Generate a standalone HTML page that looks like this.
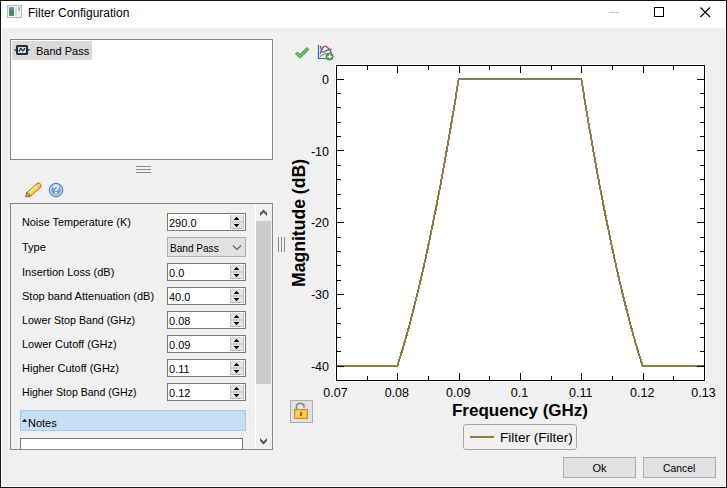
<!DOCTYPE html>
<html><head><meta charset="utf-8">
<style>
*{margin:0;padding:0;box-sizing:border-box}
html,body{width:727px;height:488px;overflow:hidden;background:#f0f0f0}
body{position:relative;font-family:"Liberation Sans",sans-serif;font-size:11px;color:#000}
.a{position:absolute}
.t{position:absolute;white-space:nowrap;line-height:12px;transform-origin:0 0}
#win{left:0;top:0;width:727px;height:488px;border:1px solid #141414;background:#f0f0f0}
#title{left:1px;top:1px;width:725px;height:27px;background:#fff}
#inner{left:1px;top:28px;width:1px;height:458px;background:#fff}
#innerr{left:725px;top:28px;width:1px;height:458px;background:#fff}
#innerb{left:1px;top:486px;width:725px;height:1px;background:#fff}
.lb{border:1px solid #828790;background:#fff}
.spin{width:79px;height:18px;border:1px solid #7a7a7a;background:#fff}
.sbtn{position:absolute;left:63px;width:14px;height:7px;border:1px solid #d4d4d4;background:#e9e9e9}
.combo{width:79px;height:20px;border:1px solid #adadad;background:#e1e1e1}
.btn{border:1px solid #adadad;background:#e1e1e1}
</style></head><body>
<div class="a" id="win"></div>
<div class="a" id="title"></div>
<div class="a" id="inner"></div>
<div class="a" id="innerr"></div>
<div class="a" id="innerb"></div>

<!-- title bar -->
<svg class="a" style="left:0;top:0" width="727" height="30">
  <defs><linearGradient id="ig" x1="0" y1="0" x2="0" y2="1"><stop offset="0" stop-color="#6a9ccc"/><stop offset="0.5" stop-color="#3f8a6a"/><stop offset="1" stop-color="#4aa050"/></linearGradient>
  <linearGradient id="ig2" x1="0" y1="0" x2="0" y2="1"><stop offset="0" stop-color="#88b4d8"/><stop offset="1" stop-color="#a8d098"/></linearGradient></defs>
  <rect x="7.5" y="5.5" width="14" height="12" fill="#f2f2f2" stroke="#b8b8b8"/>
  <rect x="9" y="7" width="5" height="9" fill="url(#ig)"/>
  <rect x="15" y="7" width="2" height="9" fill="#dcdcdc"/>
  <rect x="18" y="7" width="2" height="4" fill="url(#ig2)"/>
  <line x1="609" y1="12.5" x2="619" y2="12.5" stroke="#c4c4c4"/>
  <rect x="654.5" y="7.5" width="9" height="9" fill="none" stroke="#000"/>
  <path d="M700.5 7.5 L710 17 M710 7.5 L700.5 17" stroke="#000" stroke-width="1.1"/>
</svg>
<div class="t" style="left:28px;top:6px;font-size:12px;line-height:14px">Filter Configuration</div>

<!-- list box -->
<div class="a lb" style="left:10px;top:39px;width:263px;height:121px"></div>
<div class="a" style="left:12px;top:41px;width:80px;height:19px;background:#d9d9d9"></div>
<svg class="a" style="left:0;top:0" width="60" height="70">
  <rect x="17" y="46" width="10" height="8" fill="none" stroke="#1b3047" stroke-width="2" rx="0.6"/>
  <path d="M14.5 50 H17 M27 50 H29.5" stroke="#1b3047" stroke-width="1.6"/>
  <path d="M19.2 51.5 Q20.3 46.8 21.8 49.5 Q23.2 52.5 24.8 48" fill="none" stroke="#1b3047" stroke-width="1.3"/>
</svg>
<div class="t" style="left:36px;top:45px;font-size:11px;line-height:12px">Band Pass</div>

<!-- splitter handle horizontal -->
<svg class="a" style="left:130px;top:160px" width="30" height="20">
  <path d="M6 6.5 H21 M6 9.5 H21 M6 12.5 H21" stroke="#868b94"/>
</svg>

<!-- pencil & help -->
<svg class="a" style="left:20px;top:176px" width="50" height="26">
  <path d="M9 18 L18.5 9.8" stroke="#c27a18" stroke-width="6" stroke-linecap="round"/>
  <path d="M9 18 L18.5 9.8" stroke="#f7dc52" stroke-width="4"/>
  <path d="M8.3 16.6 L17.3 8.8" stroke="#fff6b0" stroke-width="1"/>
  <path d="M17.5 10.6 L19 9.2" stroke="#f0c8b0" stroke-width="3.2" stroke-linecap="round"/>
  <path d="M5.5 21 L7 16.5 L10.5 19.5 Z" fill="#e8b070" stroke="#8a5010" stroke-width="0.8" stroke-linejoin="round"/>
  <circle cx="36" cy="14" r="6.8" fill="#75a0d6" stroke="#4f7fc0" stroke-width="1"/>
  <circle cx="36" cy="14" r="5.4" fill="none" stroke="#e4eefa" stroke-width="1"/>
  <path d="M34 12.2 Q34 10 36 10 Q38 10 38 12 Q38 13.3 36 14 V15" fill="none" stroke="#fff" stroke-width="1.6"/>
  <rect x="35.1" y="16" width="1.8" height="1.8" fill="#fff"/>
</svg>

<!-- scroll area -->
<div class="a lb" style="left:10px;top:203px;width:263px;height:247px;background:#f0f0f0;overflow:hidden"></div>
<!-- scrollbar -->
<div class="a" style="left:255px;top:204px;width:1px;height:245px;background:#ffffff"></div>
<div class="a" style="left:256px;top:221px;width:15px;height:163px;background:#cdcdcd"></div>
<svg class="a" style="left:255px;top:204px" width="17" height="245">
  <path d="M5 9 L8.5 5.5 L12 9 V12 L8.5 8.5 L5 12 Z" fill="#555"/>
  <path d="M5 234 L8.5 237.5 L12 234 V237 L8.5 240.5 L5 237 Z" fill="#555"/>
</svg>

<!-- labels -->
<div class="t" style="left:22px;top:216px;transform:scaleX(0.985)">Noise Temperature (K)</div>
<div class="t" style="left:22px;top:241px">Type</div>
<div class="t" style="left:22px;top:266px">Insertion Loss (dB)</div>
<div class="t" style="left:22px;top:290px">Stop band Attenuation (dB)</div>
<div class="t" style="left:22px;top:314px;transform:scaleX(0.969)">Lower Stop Band (GHz)</div>
<div class="t" style="left:22px;top:338px">Lower Cutoff (GHz)</div>
<div class="t" style="left:22px;top:362px">Higher Cutoff (GHz)</div>
<div class="t" style="left:22px;top:386px;transform:scaleX(0.96)">Higher Stop Band (GHz)</div>

<!-- spinboxes -->
<div class="a spin" style="left:167px;top:213px"><div class="t" style="left:1px;top:3px">290.0</div></div>
<div class="a combo" style="left:167px;top:237px"><div class="t" style="left:2px;top:4px;transform:scaleX(0.915)">Band Pass</div></div>
<div class="a spin" style="left:167px;top:263px"><div class="t" style="left:1px;top:3px">0.0</div></div>
<div class="a spin" style="left:167px;top:287px"><div class="t" style="left:1px;top:3px">40.0</div></div>
<div class="a spin" style="left:167px;top:311px"><div class="t" style="left:1px;top:3px">0.08</div></div>
<div class="a spin" style="left:167px;top:335px"><div class="t" style="left:1px;top:3px">0.09</div></div>
<div class="a spin" style="left:167px;top:359px"><div class="t" style="left:1px;top:3px">0.11</div></div>
<div class="a spin" style="left:167px;top:383px"><div class="t" style="left:1px;top:3px">0.12</div></div>
<svg class="a" style="left:0;top:0" width="260" height="410">
<rect x="230" y="215" width="14" height="14" fill="#e6e6e6"/>
<path d="M230.5 215 V228.5 H243.5 V215 M231 222.0 H243" fill="none" stroke="#bcbcbc"/>
<path d="M236.5 216.8 L239.3 220 L233.7 220 Z M233.7 224 L239.3 224 L236.5 227.2 Z" fill="#000"/>
<rect x="230" y="265" width="14" height="14" fill="#e6e6e6"/>
<path d="M230.5 265 V278.5 H243.5 V265 M231 272.0 H243" fill="none" stroke="#bcbcbc"/>
<path d="M236.5 266.8 L239.3 270 L233.7 270 Z M233.7 274 L239.3 274 L236.5 277.2 Z" fill="#000"/>
<rect x="230" y="289" width="14" height="14" fill="#e6e6e6"/>
<path d="M230.5 289 V302.5 H243.5 V289 M231 296.0 H243" fill="none" stroke="#bcbcbc"/>
<path d="M236.5 290.8 L239.3 294 L233.7 294 Z M233.7 298 L239.3 298 L236.5 301.2 Z" fill="#000"/>
<rect x="230" y="313" width="14" height="14" fill="#e6e6e6"/>
<path d="M230.5 313 V326.5 H243.5 V313 M231 320.0 H243" fill="none" stroke="#bcbcbc"/>
<path d="M236.5 314.8 L239.3 318 L233.7 318 Z M233.7 322 L239.3 322 L236.5 325.2 Z" fill="#000"/>
<rect x="230" y="337" width="14" height="14" fill="#e6e6e6"/>
<path d="M230.5 337 V350.5 H243.5 V337 M231 344.0 H243" fill="none" stroke="#bcbcbc"/>
<path d="M236.5 338.8 L239.3 342 L233.7 342 Z M233.7 346 L239.3 346 L236.5 349.2 Z" fill="#000"/>
<rect x="230" y="361" width="14" height="14" fill="#e6e6e6"/>
<path d="M230.5 361 V374.5 H243.5 V361 M231 368.0 H243" fill="none" stroke="#bcbcbc"/>
<path d="M236.5 362.8 L239.3 366 L233.7 366 Z M233.7 370 L239.3 370 L236.5 373.2 Z" fill="#000"/>
<rect x="230" y="385" width="14" height="14" fill="#e6e6e6"/>
<path d="M230.5 385 V398.5 H243.5 V385 M231 392.0 H243" fill="none" stroke="#bcbcbc"/>
<path d="M236.5 386.8 L239.3 390 L233.7 390 Z M233.7 394 L239.3 394 L236.5 397.2 Z" fill="#000"/>
<path d="M233 245.5 L237 249.5 L241 245.5" fill="none" stroke="#606060" stroke-width="1.1"/>
</svg>

<!-- notes -->
<div class="a" style="left:20px;top:410px;width:226px;height:21px;background:#c7dff5;border:1px solid #9fcdf3"></div>
<svg class="a" style="left:20px;top:410px" width="12" height="20"><path d="M2 11.8 L4.6 9 L7.2 11.8 Z" fill="#000"/></svg>
<div class="t" style="left:28px;top:417px">Notes</div>
<div class="a" style="left:20px;top:438px;width:223px;height:20px;background:#fff;border:1px solid #7a7a7a"></div>
<!-- re-draw scroll area bottom border over notes box -->
<div class="a" style="left:10px;top:449px;width:263px;height:1px;background:#828790"></div>
<div class="a" style="left:10px;top:450px;width:263px;height:10px;background:#f0f0f0"></div>

<!-- vertical splitter handle -->
<svg class="a" style="left:270px;top:230px" width="20" height="30">
  <path d="M8.5 7 V22 M11.5 7 V22 M14.5 7 V22" stroke="#868b94"/>
</svg>

<!-- toolbar icons -->
<svg class="a" style="left:288px;top:40px" width="50" height="24">
  <path d="M8.2 12.6 L12 16.3 L20.2 8.3" fill="none" stroke="#3f9a3f" stroke-width="3.4"/>
  <path d="M8.2 12.6 L12 16.3 L20.2 8.3" fill="none" stroke="#7ac77a" stroke-width="1.6"/>
  <path d="M30.5 5 V18.5 H39" fill="none" stroke="#2a6ccc" stroke-width="1.2"/>
  <path d="M32 14 Q35 4.5 37.8 6.3 Q41.5 8.2 43.5 13" fill="none" stroke="#ee2a2a" stroke-width="1.2"/>
  <path d="M32.3 6 Q34 12.8 35.5 12.2 Q39 9.6 43.5 9.2" fill="none" stroke="#2a6ccc" stroke-width="1.2"/>
  <path d="M32 16.5 Q35 13.8 39 13.5" fill="none" stroke="#3a9a3a" stroke-width="1.1"/>
  <circle cx="41.6" cy="16.6" r="3.5" fill="#5aa848" stroke="#2e7a2e" stroke-width="0.8"/>
  <path d="M41.6 14.6 V18.6 M39.6 16.6 H43.6" stroke="#fff" stroke-width="1.2"/>
</svg>

<!-- chart -->
<svg class="a" style="left:0;top:0" width="727" height="488" font-family="Liberation Sans" font-size="12">
  <rect x="335" y="64" width="371" height="318" fill="#fff"/>
  <polyline fill="none" stroke="#8a7d45" stroke-width="2" stroke-linejoin="miter" shape-rendering="crispEdges" points="336.0,366.0 397.3,366.0 399.4,359.6 401.4,353.0 403.5,346.2 405.5,339.1 407.6,331.8 409.6,324.4 411.6,316.6 413.7,308.7 415.7,300.6 417.8,292.2 419.8,283.6 421.9,274.8 423.9,265.8 426.0,256.6 428.0,247.1 430.0,237.4 432.1,227.5 434.1,217.4 436.2,207.1 438.2,196.5 440.3,185.8 442.3,174.8 444.4,163.6 446.4,152.2 448.4,140.5 450.5,128.6 452.5,116.6 454.6,104.3 456.6,91.7 458.7,79.0 581.3,79.0 583.4,91.7 585.4,104.3 587.5,116.6 589.5,128.6 591.6,140.5 593.6,152.2 595.6,163.6 597.7,174.8 599.7,185.8 601.8,196.5 603.8,207.1 605.9,217.4 607.9,227.5 610.0,237.4 612.0,247.1 614.0,256.6 616.1,265.8 618.1,274.8 620.2,283.6 622.2,292.2 624.3,300.6 626.3,308.7 628.4,316.6 630.4,324.4 632.4,331.8 634.5,339.1 636.5,346.2 638.6,353.0 640.6,359.6 642.7,366.0 704.0,366.0"/>
  <g id="ticks" stroke="#000" stroke-width="1"><path d="M336 79.5 h8 M705 79.5 h-8 M336 93.5 h5 M705 93.5 h-5 M336 107.5 h5 M705 107.5 h-5 M336 122.5 h5 M705 122.5 h-5 M336 136.5 h5 M705 136.5 h-5 M336 150.5 h8 M705 150.5 h-8 M336 165.5 h5 M705 165.5 h-5 M336 179.5 h5 M705 179.5 h-5 M336 194.5 h5 M705 194.5 h-5 M336 208.5 h5 M705 208.5 h-5 M336 222.5 h8 M705 222.5 h-8 M336 237.5 h5 M705 237.5 h-5 M336 251.5 h5 M705 251.5 h-5 M336 265.5 h5 M705 265.5 h-5 M336 280.5 h5 M705 280.5 h-5 M336 294.5 h8 M705 294.5 h-8 M336 308.5 h5 M705 308.5 h-5 M336 323.5 h5 M705 323.5 h-5 M336 337.5 h5 M705 337.5 h-5 M336 351.5 h5 M705 351.5 h-5 M336 366.5 h8 M705 366.5 h-8 M367.5 381 v-5 M367.5 65 v5 M397.5 381 v-8 M397.5 65 v8 M428.5 381 v-5 M428.5 65 v5 M459.5 381 v-8 M459.5 65 v8 M489.5 381 v-5 M489.5 65 v5 M520.5 381 v-8 M520.5 65 v8 M551.5 381 v-5 M551.5 65 v5 M581.5 381 v-8 M581.5 65 v8 M612.5 381 v-5 M612.5 65 v5 M643.5 381 v-8 M643.5 65 v8 M673.5 381 v-5 M673.5 65 v5"/></g>
  <rect x="336.5" y="65.5" width="368" height="315" fill="none" stroke="#000"/>
  <g text-anchor="end" font-size="12.5">
    <text x="329" y="84">0</text>
    <text x="329" y="156">-10</text>
    <text x="329" y="227">-20</text>
    <text x="329" y="299">-30</text>
    <text x="329" y="371">-40</text>
  </g>
  <g text-anchor="middle" font-size="12.5">
    <text x="335.5" y="397">0.07</text>
    <text x="396.8" y="397">0.08</text>
    <text x="458.2" y="397">0.09</text>
    <text x="519.5" y="397">0.1</text>
    <text x="580.8" y="397">0.11</text>
    <text x="642.2" y="397">0.12</text>
    <text x="703.5" y="397">0.13</text>
  </g>
  <text x="520" y="416" text-anchor="middle" font-weight="bold" font-size="17">Frequency (GHz)</text>
  <text transform="translate(305,223) rotate(-90)" text-anchor="middle" font-weight="bold" font-size="17.6">Magnitude (dB)</text>
</svg>

<!-- lock button -->
<div class="a btn" style="left:290px;top:400px;width:23px;height:23px"></div>
<svg class="a" style="left:290px;top:400px" width="23" height="23">
  <path d="M6.5 9.5 V6.3 Q6.5 3.4 10.3 3.4 Q14 3.4 14 6.5 V7.5" fill="none" stroke="#8a8a8a" stroke-width="1.6"/>
  <rect x="4.5" y="9.5" width="13" height="9" fill="#f2c24a" stroke="#d68a1a"/>
  <path d="M6 12 H9 M13 12 H16 M6 14 H9 M13 14 H16 M6 16 H9 M13 16 H16" stroke="#fbe49a" stroke-width="0.8"/>
  <rect x="10" y="12" width="2" height="4" fill="#b0701a"/>
</svg>

<!-- legend -->
<div class="a" style="left:463px;top:424px;width:114px;height:26px;border:1px solid #a6a6a6;border-radius:3px;background:#f0f0f0"></div>
<div class="a" style="left:470px;top:436px;width:24px;height:2px;background:#8a7d45"></div>
<div class="t" style="left:500px;top:431px;font-size:13.5px;line-height:14px">Filter (Filter)</div>

<!-- buttons -->
<div class="a btn" style="left:563px;top:457px;width:73px;height:21px"></div>
<div class="t" style="left:592.5px;top:462px">Ok</div>
<div class="a btn" style="left:643px;top:457px;width:73px;height:21px"></div>
<div class="t" style="left:662.5px;top:462px;transform:scaleX(0.94)">Cancel</div>
</body></html>
